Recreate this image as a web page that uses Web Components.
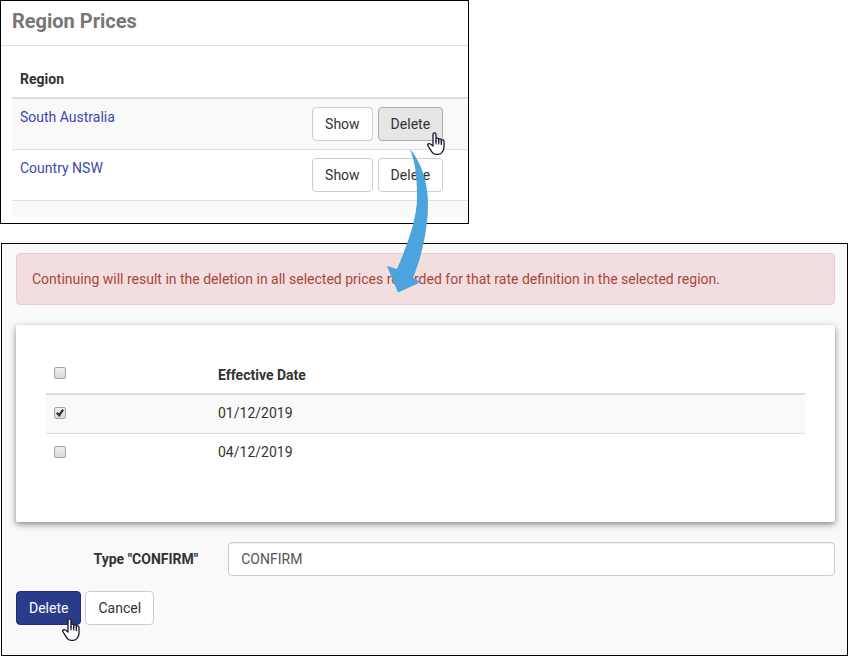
<!DOCTYPE html>
<html lang="en">
<head>
<meta charset="utf-8">
<title>Region Prices</title>
<style>
body { margin: 0; background: #fff; color: #333; font: 14px/20px Roboto, "Liberation Sans", sans-serif; }
</style>
</head>
<body>
<price-page>
  <region-panel></region-panel>
  <delete-panel></delete-panel>
</price-page>

<script>
function define(name, html, setup) {
  const template = document.createElement('template');
  template.innerHTML = '<style>:host,*{box-sizing:border-box}</style>' + html;
  customElements.define(name, class extends HTMLElement {
    constructor() {
      super();
      this.attachShadow({ mode: 'open' }).append(template.content.cloneNode(true));
    }
    connectedCallback() { if (setup) setup(this, this.shadowRoot); }
  });
}

define('hand-cursor', `
<style>:host{display:block;width:18px;height:23px;pointer-events:none} svg{display:block}</style>
<svg width="18" height="23" viewBox="0 0 18 23" aria-hidden="true">
<path d="M6 14V2.6C6 .2 9 .2 9 2.6V9.2V7.4C9 5.5 11.7 5.7 11.7 7.6V9.5V8C11.7 6.3 14.3 6.5 14.3 8.2V10V9C14.3 7.5 17 7.6 17 9.3V15.5C17 17.6 16 19 15.3 20C14.4 21.5 13 22.3 11.2 22.3H9C7 22.3 5.8 21.4 4.8 19.8L1.1 14C0 12.2 1.9 10.8 3.5 12.1Z" fill="#fff" stroke="#15152b" stroke-width="1.3" stroke-linejoin="round"/>
<path d="M9 8.5V12M11.7 8.8V12M14.3 9.5V12.5" stroke="#15152b" stroke-width="1.2" stroke-linecap="round"/>
</svg>`);

define('ui-button', `
<style>
:host{display:inline-block;position:relative}
button{display:block;height:34px;padding:0 12px;border:1px solid #ccc;border-radius:4px;background:#fff;color:#333;font:inherit;white-space:nowrap}
:host([kind=hover]) button{background:#e6e6e6;border-color:#adadad}
:host([kind=primary]) button{background:#283c8a;border-color:#1f2f70;color:#fff}
::slotted(hand-cursor){position:absolute;z-index:2;left:49px;top:25px}
:host([kind=primary]) ::slotted(hand-cursor){left:46px;top:27px}
</style>
<button type="button"><slot></slot></button><slot name="pointer"></slot>`);

define('tick-box', `
<style>
:host{display:block;height:12px}
input{appearance:none;display:block;width:12px;height:12px;margin:0;padding:1px;border:1px solid #a5a5a5;border-radius:2px;background:linear-gradient(#eee,#d9d9d9)}
input:checked::before{content:"";display:block;width:8px;height:8px;background:#303030;clip-path:polygon(0 55%,20% 36%,38% 56%,78% 0,100% 16%,42% 100%)}
</style>
<input type="checkbox">`, (host, root) => {
  const input = root.querySelector('input');
  input.checked = host.hasAttribute('checked');
  input.setAttribute('aria-label', host.getAttribute('label'));
});

define('region-panel', `
<style>
:host{display:block;width:calc(55% + 3px);border:1px solid #000;background:#fff;overflow:hidden}
h1{margin:0;padding:7px 11px 11px;border-bottom:1px solid #ddd;font-size:20px;line-height:26px;font-weight:700;color:#777}
.body{padding:15px 0 6px 11px}
table{width:100%;border-collapse:separate;border-spacing:0;table-layout:fixed}
th,td{padding:8px;text-align:left;vertical-align:top}
th{border-bottom:2px solid #ddd}
th:first-child{width:64%}
tbody tr+tr td{border-top:1px solid #ddd}
tbody tr:nth-child(odd){background:#f9f9f9}
a{color:#3949ab;text-decoration:none}
.actions{display:flex;gap:5px}
</style>
<h1>Region Prices</h1>
<div class="body"><table>
<thead><tr><th scope="col">Region</th><th></th></tr></thead>
<tbody>
<tr><td><a href="#south-australia">South Australia</a></td><td><div class="actions"><ui-button>Show</ui-button><ui-button kind="hover">Delete<hand-cursor slot="pointer"></hand-cursor></ui-button></div></td></tr>
<tr><td><a href="#country-nsw">Country NSW</a></td><td><div class="actions"><ui-button>Show</ui-button><ui-button>Delete</ui-button></div></td></tr>
<tr><td></td><td></td></tr>
</tbody></table></div>`);

define('alert-box', `
<style>:host{display:block;padding:15px;border:1px solid #ebccd1;border-radius:4px;background:#f2dede;color:#a94442}</style>
<slot></slot>`);

define('date-card', `
<style>
:host{display:block;padding:32px 30px 50px;border-radius:2px;background:#fff;box-shadow:0 2px 5px rgba(0,0,0,.3),0 3px 8px rgba(0,0,0,.2)}
table{width:100%;border-collapse:separate;border-spacing:0;table-layout:fixed}
th,td{height:38px;padding:8px 8px 10px;text-align:left;vertical-align:top}
th{padding-bottom:8px;border-bottom:2px solid #ddd}
th:first-child{width:164px}
tbody tr+tr td{border-top:1px solid #ddd}
tbody tr:nth-child(odd){background:#f9f9f9}
th tick-box{margin-top:2px}
td tick-box{margin-top:4px}
</style>
<table>
<thead><tr><th><tick-box label="Select all"></tick-box></th><th scope="col">Effective Date</th></tr></thead>
<tbody>
<tr><td><tick-box checked label="01/12/2019"></tick-box></td><td>01/12/2019</td></tr>
<tr><td><tick-box label="04/12/2019"></tick-box></td><td>04/12/2019</td></tr>
</tbody></table>`);

define('confirm-field', `
<style>
:host{display:grid;grid-template-columns:25% 1fr;align-items:center;margin:0 -15px}
label{padding:0 15px;text-align:right;font-weight:700}
div{padding:0 15px}
input{display:block;width:100%;height:34px;padding:6px 12px;border:1px solid #ccc;border-radius:4px;background:#fff;box-shadow:inset 0 1px 1px rgba(0,0,0,.075);font:inherit;color:#555}
</style>
<label for="confirm">Type "CONFIRM"</label><div><input id="confirm" type="text" value="CONFIRM"></div>`);

define('delete-panel', `
<style>
:host{display:block;margin:19px 0 0 1px;padding:9px 12px 30px 14px;border:1px solid #000;background:#f9f9f9}
.stack{display:grid;gap:20px}
.actions{display:flex;gap:4px;margin-top:15px}
</style>
<div class="stack">
<alert-box>Continuing will result in the deletion in all selected prices recorded for that rate definition in the selected region.</alert-box>
<date-card></date-card>
<confirm-field></confirm-field>
</div>
<div class="actions"><ui-button kind="primary">Delete<hand-cursor slot="pointer"></hand-cursor></ui-button><ui-button>Cancel</ui-button></div>`);

define('flow-arrow', `
<style>:host{display:block;pointer-events:none} svg{display:block}</style>
<svg width="44" height="146" viewBox="386 148 44 146" aria-hidden="true">
<path d="M410 149C422 163 428 184 428 204C428 228 422 256 413 278L421 282L398 292.500L387 266L397 269C407 246 417 219 417 198C417 178 416 165 410 149Z" fill="#4da3dc"/>
</svg>`);

define('price-page', `
<style>
:host{display:block;position:relative}
flow-arrow{position:absolute;left:386px;top:148px}
</style>
<slot></slot><flow-arrow></flow-arrow>`);
</script>
</body>
</html>
